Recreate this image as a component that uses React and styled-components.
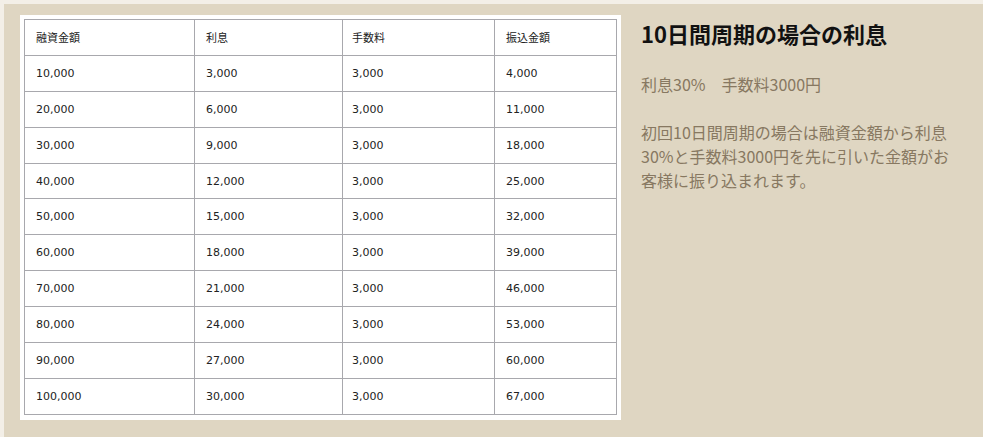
import React from "react";
import styled, { createGlobalStyle } from "styled-components";

const GlobalStyle = createGlobalStyle`
  html, body {
    margin: 0;
    padding: 0;
    background: #f3efe7;
  }
  body {
    font-family: "Noto Sans CJK JP", "Noto Sans", sans-serif;
  }
`;

const Wrapper = styled.div`
  margin: 4px 0 0 4px;
  height: 433px;
  background-color: #dfd6c2;
  display: flex;
  align-items: flex-start;
  padding: 11px 16px 0 16px;
  box-sizing: border-box;
  overflow: hidden;
`;

const TablePanel = styled.div`
  background: #ffffff;
  padding: 4px 4px 5px 4px;
  flex: 0 0 auto;
`;

const RateTable = styled.table`
  width: 592px;
  table-layout: fixed;
  border-collapse: collapse;
  font-family: "DejaVu Sans", "Noto Sans CJK JP", sans-serif;
  font-size: 11px;
  color: #222;
`;

const Row = styled.tr`
  height: 35.9px;
`;

const Cell = styled.td`
  border: 1px solid #a8a8ad;
  padding: 0 0 0 ${(p) => p.$pad || 11}px;
  vertical-align: middle;
  white-space: nowrap;
`;

const Info = styled.div`
  width: 312px;
  margin-left: 20px;
  padding-top: 3px;
`;

const Title = styled.h2`
  margin: 0 0 23px 0;
  font-size: 22px;
  line-height: 31px;
  font-weight: 700;
  color: #111;
`;

const Text = styled.p`
  margin: 0 0 24px 0;
  font-size: 16px;
  line-height: 24px;
  color: #877861;
`;

const cols = [170, 148, 152, 122];
const pads = [11, 11, 9, 11];

const rows = [
  ["10,000", "3,000", "3,000", "4,000"],
  ["20,000", "6,000", "3,000", "11,000"],
  ["30,000", "9,000", "3,000", "18,000"],
  ["40,000", "12,000", "3,000", "25,000"],
  ["50,000", "15,000", "3,000", "32,000"],
  ["60,000", "18,000", "3,000", "39,000"],
  ["70,000", "21,000", "3,000", "46,000"],
  ["80,000", "24,000", "3,000", "53,000"],
  ["90,000", "27,000", "3,000", "60,000"],
  ["100,000", "30,000", "3,000", "67,000"],
];

export default function App() {
  return (
    <>
      <GlobalStyle />
      <Wrapper>
        <TablePanel>
          <RateTable>
            <colgroup>
              {cols.map((w, i) => (
                <col key={i} style={{ width: w }} />
              ))}
            </colgroup>
            <tbody>
              <Row>
                {["融資金額", "利息", "手数料", "振込金額"].map((h, i) => (
                  <Cell key={i} $pad={pads[i]}>
                    {h}
                  </Cell>
                ))}
              </Row>
              {rows.map((r, ri) => (
                <Row key={ri}>
                  {r.map((v, i) => (
                    <Cell key={i} $pad={pads[i]}>
                      {v}
                    </Cell>
                  ))}
                </Row>
              ))}
            </tbody>
          </RateTable>
        </TablePanel>
        <Info>
          <Title>10日間周期の場合の利息</Title>
          <Text>利息30%　手数料3000円</Text>
          <Text>
            初回10日間周期の場合は融資金額から利息30%と手数料3000円を先に引いた金額がお客様に振り込まれます。
          </Text>
        </Info>
      </Wrapper>
    </>
  );
}
